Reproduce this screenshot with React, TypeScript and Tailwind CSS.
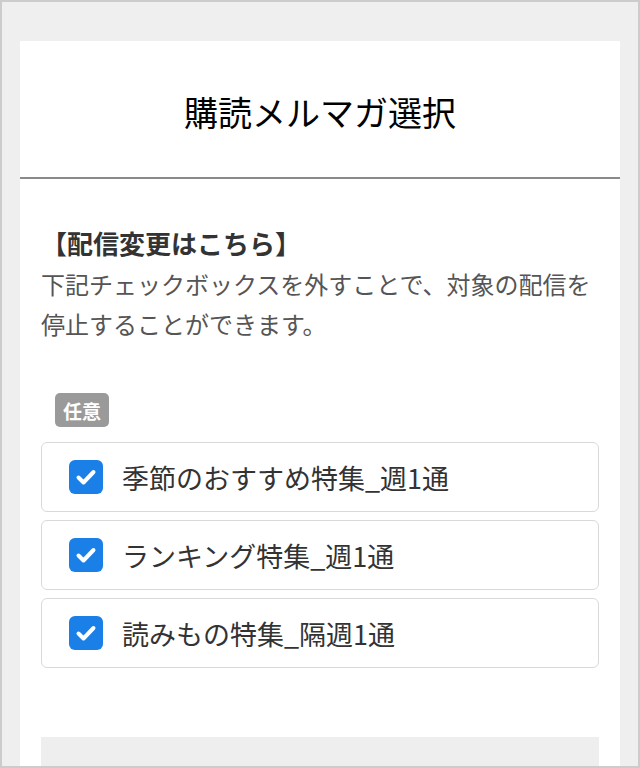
import React from "react";

const items = ["季節のおすすめ特集_週1通", "ランキング特集_週1通", "読みもの特集_隔週1通"];

function Check() {
  return (
    <span className="flex h-[34px] w-[34px] shrink-0 items-center justify-center rounded-[6px] bg-[#1a7fe6]">
      <svg width="24" height="24" viewBox="0 0 24 24" fill="none">
        <path d="M4.5 12.5 L9.5 17.5 L19.5 7" stroke="white" strokeWidth="4" strokeLinecap="round" strokeLinejoin="round" />
      </svg>
    </span>
  );
}

export default function App() {
  return (
    <div className="h-[768px] w-[640px] overflow-hidden border-2 border-[#cccccc] bg-[#efefef] pl-[18px] pt-[39px] font-['Noto_Sans_CJK_JP',sans-serif]">
      <div className="h-[800px] w-[600px] bg-white">
        <div className="flex h-[138px] items-center justify-center border-b-2 border-[#8a8a8a] pt-3">
          <h1 className="font-['Liberation_Serif','Noto_Sans_CJK_JP',serif] text-[34px] leading-[40px] text-black">
            購読メルマガ選択
          </h1>
        </div>
        <div className="px-[21px]">
          <h2 className="mt-[45px] text-[26px] font-bold leading-[38px] text-[#333333]">【配信変更はこちら】</h2>
          <p className="mt-[2px] text-[24px] leading-[40px] text-[#555555]">
            下記チェックボックスを外すことで、対象の配信を停止することができます。
          </p>
          <div className="ml-[14px] mt-[49px] flex h-[34px] w-[54px] items-center justify-center rounded-[5px] bg-[#9a9a9a] text-[19px] font-bold leading-none text-white">
            任意
          </div>
          <div className="mt-[15px] flex flex-col gap-[8px]">
            {items.map((t) => (
              <label
                key={t}
                className="flex h-[70px] items-center gap-[19px] rounded-[6px] border border-[#d9d9d9] pl-[27px]"
              >
                <Check />
                <span className="text-[27px] leading-none text-[#333333]">{t}</span>
              </label>
            ))}
          </div>
          <div className="mt-[69px] h-[60px] bg-[#eeeeee]" />
        </div>
      </div>
    </div>
  );
}
